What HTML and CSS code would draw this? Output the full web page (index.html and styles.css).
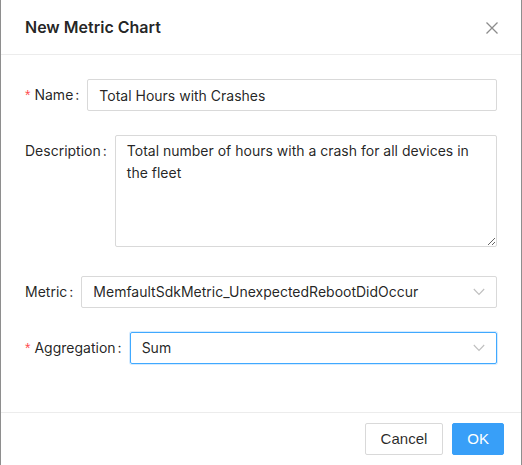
FILE: index.html
```html
<!DOCTYPE html>
<html lang="en">
<head>
<meta charset="utf-8">
<title>New Metric Chart</title>
<link rel="stylesheet" href="styles.css">
</head>
<body>
<div class="modal">
  <div class="modal-header">
    <div class="modal-title">New Metric Chart</div>
    <button class="modal-close" aria-label="Close">
      <svg width="14" height="14" viewBox="0 0 14 14"><path d="M1.5 1.5 L12.5 12.5 M12.5 1.5 L1.5 12.5" stroke="#8c8c8c" stroke-width="1.3" fill="none"/></svg>
    </button>
  </div>
  <div class="modal-body">
    <div class="form-item">
      <label class="form-label required">Name</label>
      <input class="input" type="text" value="Total Hours with Crashes">
    </div>
    <div class="form-item form-item-area">
      <label class="form-label">Description</label>
      <textarea class="input textarea">Total number of hours with a crash for all devices in the fleet</textarea>
    </div>
    <div class="form-item">
      <label class="form-label">Metric</label>
      <div class="select">
        <span class="select-value">MemfaultSdkMetric_UnexpectedRebootDidOccur</span>
        <svg class="select-arrow" width="12" height="8" viewBox="0 0 12 8"><path d="M0.8 1 L6 6.4 L11.2 1" stroke="#bfbfbf" stroke-width="1.1" fill="none"/></svg>
      </div>
    </div>
    <div class="form-item">
      <label class="form-label required">Aggregation</label>
      <div class="select select-focused">
        <span class="select-value">Sum</span>
        <svg class="select-arrow" width="12" height="8" viewBox="0 0 12 8"><path d="M0.8 1 L6 6.4 L11.2 1" stroke="#bfbfbf" stroke-width="1.1" fill="none"/></svg>
      </div>
    </div>
  </div>
  <div class="modal-footer">
    <button class="btn">Cancel</button>
    <button class="btn btn-primary">OK</button>
  </div>
</div>
</body>
</html>
```
FILE: styles.css
```css
* { box-sizing: border-box; }
html, body { margin: 0; padding: 0; background: #ffffff; }
body { font-family: Inter, "Noto Sans", sans-serif; color: rgba(0,0,0,0.85); font-size: 14px; }

.modal {
  width: 522px;
  height: 465px;
  border-left: 1px solid #8e8e8e;
  border-right: 1px solid #8e8e8e;
  background: #fff;
  display: flex;
  flex-direction: column;
}

.modal-header {
  height: 55px;
  padding: 0 24px;
  border-bottom: 1px solid #ececec;
  display: flex;
  align-items: center;
  justify-content: space-between;
}
.modal-title {
  font-size: 16px;
  font-weight: 600;
  line-height: 22px;
  color: rgba(0,0,0,0.87);
}
.modal-close {
  border: 0;
  background: none;
  padding: 0;
  width: 14px;
  height: 14px;
  margin-right: -2px;
  margin-top: 2px;
  display: flex;
}

.modal-body {
  padding: 24px 24px 24px 24px;
}
.form-item {
  display: flex;
  align-items: flex-start;
  margin-bottom: 24px;
}
.form-item-area { margin-bottom: 29px; }

.form-label {
  line-height: 32px;
  white-space: nowrap;
  font-size: 14px;
  color: rgba(0,0,0,0.87);
}
.form-label::after {
  content: ":";
  margin: 0 8px 0 2px;
}
.form-label.required::before {
  content: "*";
  color: #ff4d4f;
  margin-right: 4px;
  font-family: SimSun, "Liberation Sans", sans-serif;
  font-size: 14px;
}

.input {
  flex: 1;
  height: 32px;
  border: 1px solid #d9d9d9;
  border-radius: 2px;
  padding: 4px 11px;
  font-family: Inter, "Noto Sans", sans-serif;
  font-size: 14px;
  line-height: 22px;
  color: rgba(0,0,0,0.87);
  background: #fff;
  outline: none;
  min-width: 0;
}
.textarea {
  height: 112px;
  resize: vertical;
  display: block;
}

.select {
  flex: 1;
  height: 32px;
  border: 1px solid #d9d9d9;
  border-radius: 2px;
  padding: 0 11px;
  display: flex;
  align-items: center;
  justify-content: space-between;
  line-height: 30px;
}
.select-value { color: rgba(0,0,0,0.87); }
.select-arrow { margin-right: 0; }
.select-focused {
  border-color: #40a9ff;
  box-shadow: 0 0 0 1px rgba(24,144,255,0.18);
}

.modal-footer {
  border-top: 1px solid #ececec;
  padding: 10px 17px 10px 16px;
  display: flex;
  justify-content: flex-end;
  gap: 9px;
}
.btn {
  height: 32px;
  padding: 4px 15px;
  font-family: "Liberation Sans", Arial, sans-serif;
  font-size: 15px;
  line-height: 22px;
  border: 1px solid #d9d9d9;
  border-radius: 2px;
  background: #fff;
  color: rgba(0,0,0,0.85);
}
.btn-primary {
  background: #389ff8;
  border-color: #389ff8;
  color: #fff;
  padding: 4px 14px;
}
```
